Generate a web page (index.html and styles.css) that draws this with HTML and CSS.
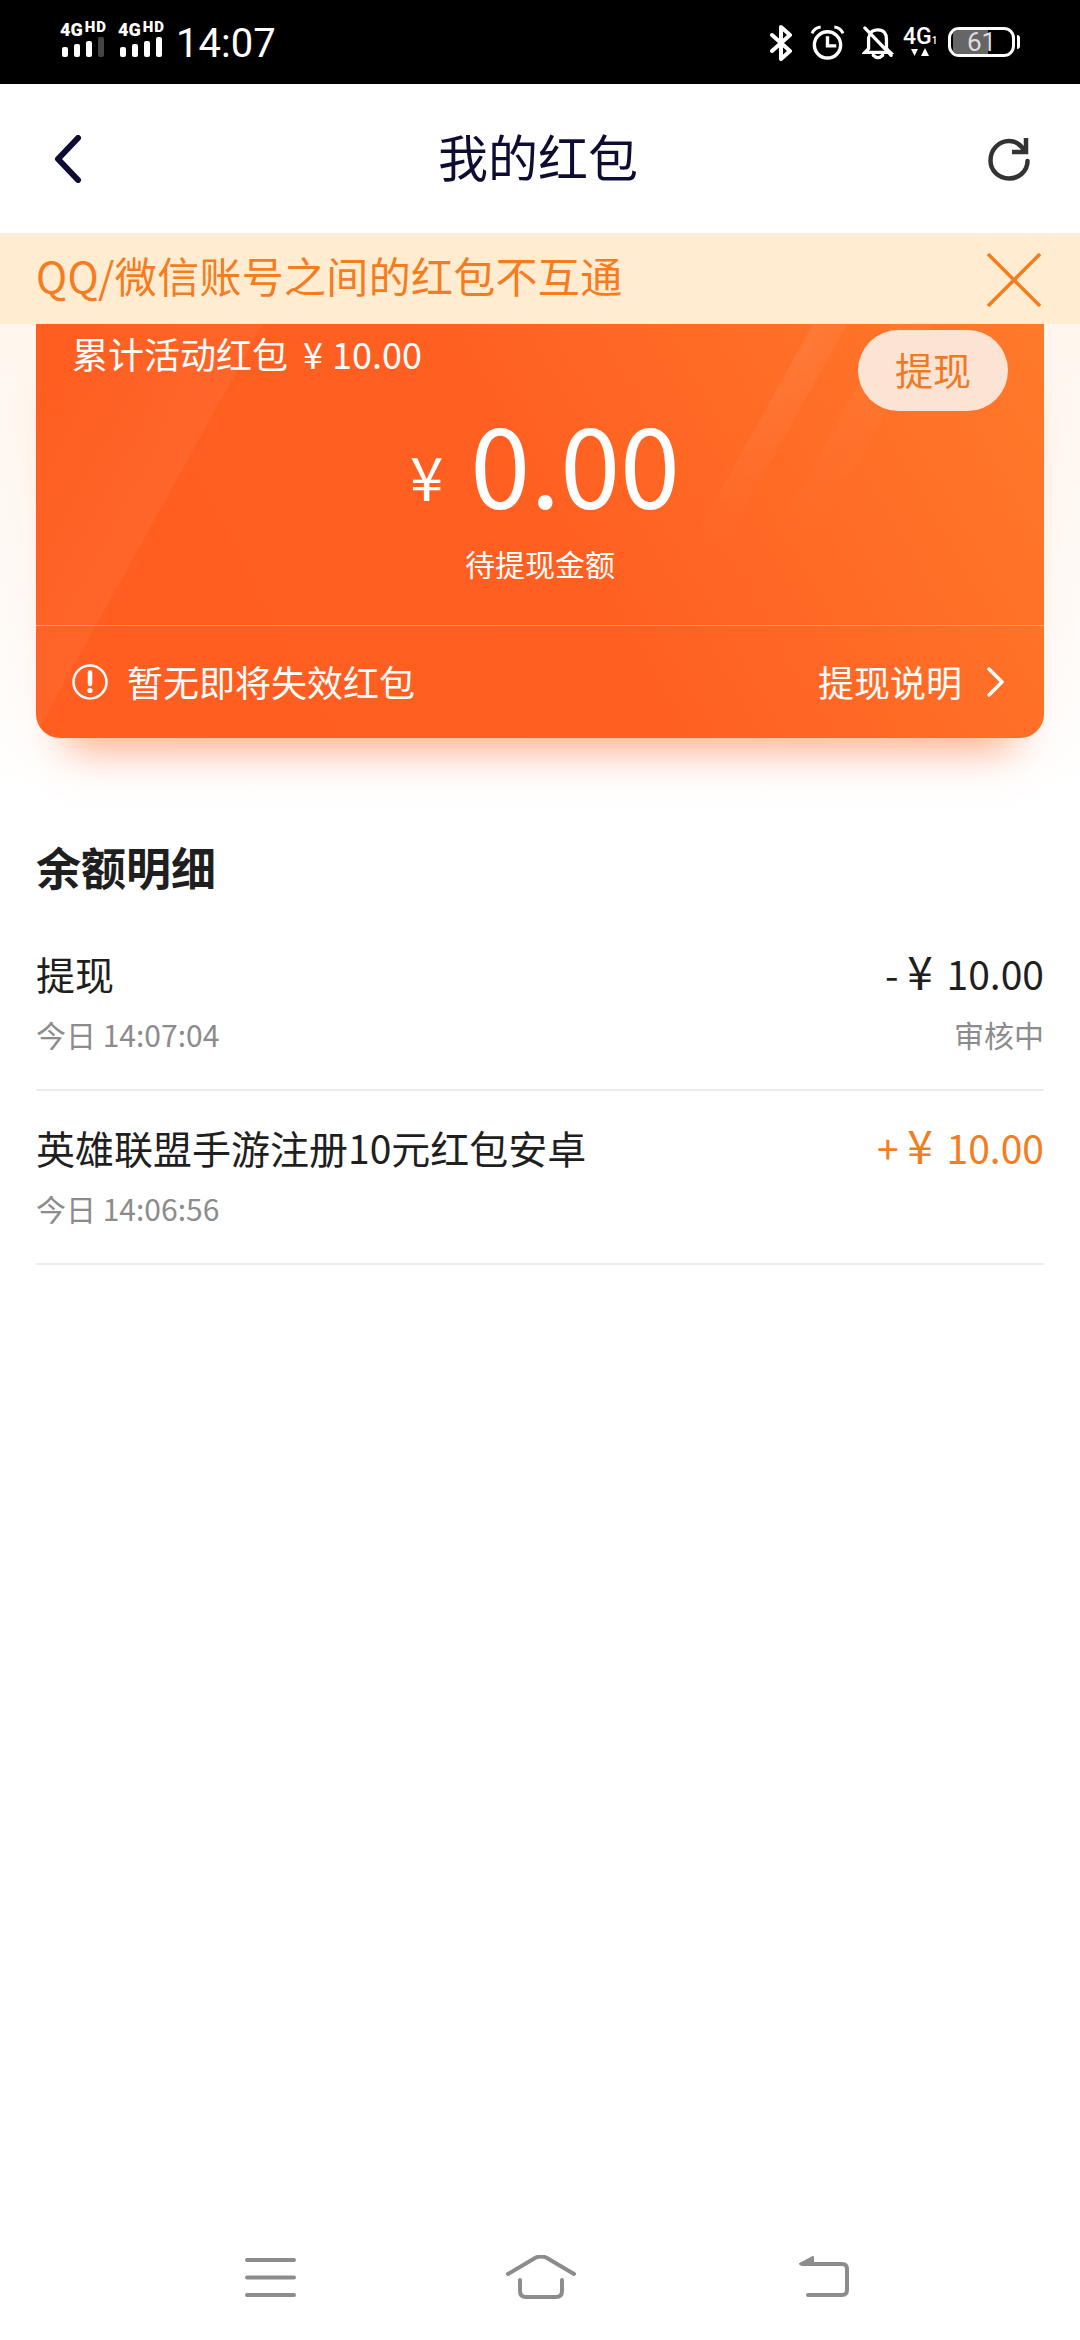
FILE: index.html
```html
<!DOCTYPE html>
<html lang="zh-CN">
<head>
    <meta charset="UTF-8">
    <meta name="viewport" content="width=device-width, initial-scale=1.0">
    <title>我的红包</title>
    <link rel="stylesheet" href="styles.css">
</head>
<body>
    <!-- Status bar -->
    <div class="status-bar">
        <div class="signal">
            <div class="signal-label"><span class="signal-g">4G</span><span class="signal-hd">HD</span></div>
            <div class="bars"><i class="bar-1"></i><i class="bar-2"></i><i class="bar-3"></i><i class="bar-4 dim"></i></div>
        </div>
        <div class="signal">
            <div class="signal-label"><span class="signal-g">4G</span><span class="signal-hd">HD</span></div>
            <div class="bars"><i class="bar-1"></i><i class="bar-2"></i><i class="bar-3"></i><i class="bar-4"></i></div>
        </div>
        <span class="clock">14:07</span>
        <div class="status-right">
            <svg class="ic-bt" width="22" height="36" viewBox="0 0 22 36" fill="none" stroke="#fff" stroke-width="4" stroke-linecap="round" stroke-linejoin="round">
                <path d="M2 10 L20 26 L11 34 V2 L20 10 L2 26"/>
            </svg>
            <svg class="ic-alarm" width="35" height="36" viewBox="0 0 36 36" fill="none" stroke="#fff" stroke-width="3.5">
                <circle cx="18" cy="20" r="13.5"/>
                <path d="M18 11 V21 H27"/>
                <path d="M2 8 Q5 2 11 1.5" stroke-width="3"/>
                <path d="M34 8 Q31 2 25 1.5" stroke-width="3"/>
            </svg>
            <svg class="ic-bell" width="32" height="36" viewBox="0 0 34 36" fill="none" stroke="#fff" stroke-width="3.5" stroke-linecap="round">
                <path d="M8 10 C9 5 13 4 17 4 C23 4 26 8 26 14 V24 L30 28 H3 L7 24 V12"/>
                <path d="M12 31 Q17 36 22 31"/>
                <path d="M3 2 L31 31"/>
            </svg>
            <div class="net">
                <div class="net-label">4G<small>1</small></div>
                <svg width="18" height="9" viewBox="0 0 18 9" fill="#fff">
                    <path d="M0 1 H7 L3.5 8 Z"/>
                    <path d="M10 8 H18 L14 0 Z"/>
                </svg>
            </div>
            <div class="battery">
                <div class="battery-fill"></div>
                <span class="battery-num">61</span>
            </div>
            <span class="battery-nub"></span>
        </div>
    </div>

    <!-- Title bar -->
    <div class="top-bar">
        <svg width="28" height="48" viewBox="0 0 28 48" fill="none" stroke="#0d0c33" stroke-width="6" stroke-linecap="round" stroke-linejoin="round">
            <path d="M24 3 L4 24 L24 45"/>
        </svg>
        <h1>我的红包</h1>
        <svg width="42" height="44" viewBox="0 0 42 44" fill="none" stroke="#333" stroke-width="4.5" stroke-linecap="round">
            <path d="M36 13 C32 7 27 4 21 4 C10.5 4 2.5 13 2.5 23.5 C2.5 34 11 41.5 21 41.5 C31 41.5 39.5 34 39.5 24"/>
            <path d="M38 1 V15 H24" stroke-linecap="butt"/>
        </svg>
    </div>

    <!-- Notice -->
    <div class="notice">
        <span class="notice-text">QQ/微信账号之间的红包不互通</span>
        <svg width="54" height="54" viewBox="0 0 54 54" fill="none" stroke="#f57c1f" stroke-width="3.5">
            <path d="M1 1 L53 53 M53 1 L1 53"/>
        </svg>
    </div>

    <!-- Balance card -->
    <div class="wallet">
        <div class="card">
            <div class="card-top">
                <span class="total">累计活动红包 <span class="total-sign">¥</span>10.00</span>
                <span class="withdraw-btn">提现</span>
            </div>
            <div class="amount"><span class="amount-sign">¥</span>0.00</div>
            <div class="amount-label">待提现金额</div>
            <div class="card-foot">
                <div class="foot-left">
                    <svg width="36" height="36" viewBox="0 0 36 36" fill="none" stroke="#fff" stroke-width="2.5">
                        <circle cx="18" cy="18" r="16.5"/>
                        <path d="M18 8.5 V20" stroke-width="4.5" stroke-linecap="round"/>
                        <circle cx="18" cy="26.5" r="2.6" fill="#fff" stroke="none"/>
                    </svg>
                    <span class="foot-text">暂无即将失效红包</span>
                </div>
                <div class="foot-right">
                    <span class="foot-text">提现说明</span>
                    <svg width="18" height="30" viewBox="0 0 18 30" fill="none" stroke="#fff" stroke-width="3.5" stroke-linecap="round" stroke-linejoin="round">
                        <path d="M2 2 L15 15 L2 28"/>
                    </svg>
                </div>
            </div>
        </div>
    </div>

    <!-- Records -->
    <div class="details">
        <h2>余额明细</h2>
        <div class="record">
            <div class="record-line">
                <span class="record-name">提现</span>
                <span class="record-money">- <span class="money-sign">¥</span> 10.00</span>
            </div>
            <div class="record-line sub">
                <span>今日 14:07:04</span>
                <span>审核中</span>
            </div>
        </div>
        <div class="record">
            <div class="record-line">
                <span class="record-name">英雄联盟手游注册10元红包安卓</span>
                <span class="record-money income">+ <span class="money-sign">¥</span> 10.00</span>
            </div>
            <div class="record-line sub">
                <span>今日 14:06:56</span>
            </div>
        </div>
    </div>

    <!-- System navigation -->
    <div class="nav-bar">
        <svg class="nav-menu" width="51" height="40" viewBox="0 0 51 40" fill="none" stroke="#8c8c8c" stroke-width="4" stroke-linecap="round">
            <path d="M2 3 H49 M2 20.5 H49 M2 38 H49"/>
        </svg>
        <svg class="nav-home" width="70" height="44" viewBox="0 0 70 44" fill="none" stroke="#8c8c8c" stroke-width="4" stroke-linecap="round" stroke-linejoin="round">
            <path d="M2 19 L29 3 Q35 0 41 3 L68 19"/>
            <path d="M14 25 V36 Q14 42 20 42 H50 Q56 42 56 36 V25"/>
        </svg>
        <svg class="nav-back" width="52" height="44" viewBox="0 0 52 44" fill="none" stroke="#8c8c8c" stroke-width="4" stroke-linecap="round" stroke-linejoin="round">
            <path d="M4 9 H44 Q49 9 49 14 V35 Q49 40 44 40 H10"/>
            <path d="M15 2 L2 9 L15 10 Z" fill="#8c8c8c" stroke-width="2"/>
        </svg>
    </div>
</body>
</html>
```

FILE: styles.css
```css
/* General styles */
* {
    box-sizing: border-box;
}

body {
    margin: 0;
    width: 1080px;
    height: 2340px;
    display: flex;
    flex-direction: column;
    background: #fff;
    font-family: "Noto Sans CJK SC", "Noto Sans", sans-serif;
    color: #1f1f1f;
    overflow: hidden;
}

h1, h2 {
    margin: 0;
    font-weight: normal;
}

/* Status bar */
.status-bar {
    height: 84px;
    flex-shrink: 0;
    display: flex;
    align-items: flex-start;
    padding: 0 60px 0 60px;
    background: #000;
    color: #fff;
    font-family: Roboto, sans-serif;
}

.signal {
    width: 58px;
    padding-top: 21px;
}

.signal-label {
    display: flex;
    align-items: flex-start;
    height: 16px;
    line-height: 17px;
    font-weight: 900;
}

.signal-g {
    font-size: 18px;
}

.signal-hd {
    margin-left: 2px;
    font-size: 15px;
    line-height: 13px;
    letter-spacing: 1px;
}

.bars {
    display: flex;
    align-items: flex-end;
    gap: 6px;
    height: 20px;
    padding-left: 2px;
}

.bars i {
    width: 6px;
    background: #fff;
    border-radius: 2px;
}

.bars .dim {
    background: #444;
}

.bar-1 { height: 10px; }
.bar-2 { height: 13px; }
.bar-3 { height: 16px; }
.bar-4 { height: 20px; }

.clock {
    font-size: 40px;
    line-height: 87px;
}

.status-right {
    margin-left: auto;
    display: flex;
    align-items: flex-start;
    padding-top: 25px;
}

.ic-alarm {
    margin-left: 18px;
}

.ic-bell {
    margin-left: 17px;
}

.net {
    width: 34px;
    margin-left: 9px;
    text-align: center;
    line-height: 0;
}

.net-label {
    height: 23px;
    font-size: 23px;
    font-weight: 500;
    line-height: 23px;
    white-space: nowrap;
}

.net-label small {
    font-size: 10px;
}

.battery {
    position: relative;
    width: 67px;
    height: 30px;
    margin: 2px 0 0 11px;
    border: 3px solid #fff;
    border-radius: 11px;
    overflow: hidden;
}

.battery-fill {
    width: 35px;
    height: 100%;
    margin-left: 2px;
    background: #666;
    border-radius: 3px 0 0 3px;
}

.battery-num {
    position: absolute;
    inset: 0;
    text-align: center;
    font-size: 26px;
    line-height: 25px;
    color: #ddd;
}

.battery-nub {
    width: 3px;
    height: 14px;
    margin: 10px 0 0 2px;
    background: #fff;
    border-radius: 0 3px 3px 0;
}

/* Title bar */
.top-bar {
    height: 149px;
    flex-shrink: 0;
    display: flex;
    align-items: center;
    justify-content: space-between;
    padding: 0 50px 0 54px;
    position: relative;
}

.top-bar h1 {
    position: absolute;
    left: 0;
    right: 0;
    padding: 0 4px 8px 0;
    text-align: center;
    font-size: 50px;
    line-height: 60px;
    color: #0d0c33;
}

/* Notice */
.notice {
    height: 91px;
    flex-shrink: 0;
    display: flex;
    align-items: center;
    justify-content: space-between;
    padding: 0 39px 0 36px;
    background: #ffecd1;
    border-top: 2px solid #f9eee0;
    color: #f57c1f;
}

.notice-text {
    padding-bottom: 11px;
    font-size: 42px;
    letter-spacing: 0.3px;
}

/* Balance card */
.wallet {
    height: 476px;
    flex-shrink: 0;
    padding: 0 36px;
    background: linear-gradient(to bottom, #fff6ee, #fffaf6 60%, #fff 100%);
}

.card {
    position: relative;
    isolation: isolate;
    height: 414px;
    color: #fff;
    border-radius: 0 0 24px 24px;
    background: linear-gradient(60deg, #ff5e20 0%, #ff5f21 50%, #ff7a2b 100%);
    box-shadow: 0 40px 40px -30px rgba(255, 94, 32, 0.55);
}

/* light streaks on the card */
.card::before,
.card::after {
    content: "";
    position: absolute;
    inset: 0;
    z-index: -1;
    border-radius: inherit;
}

.card::before {
    background: linear-gradient(119deg, transparent 40px, rgba(255, 255, 255, 0.045) 198px, transparent 199px);
}

.card::after {
    background:
        linear-gradient(119deg, transparent 679px, rgba(255, 255, 255, 0.07) 680px, rgba(255, 255, 255, 0.05) 709px, transparent 710px),
        linear-gradient(119deg, transparent 748px, rgba(255, 255, 255, 0.04) 749px, rgba(255, 255, 255, 0.03) 785px, transparent 786px);
    -webkit-mask-image: linear-gradient(to bottom, #000 10%, transparent 58%);
    mask-image: linear-gradient(to bottom, #000 10%, transparent 58%);
}

.card-top {
    display: flex;
    justify-content: space-between;
    align-items: flex-start;
    padding: 6px 36px 0 36px;
}

.total {
    font-size: 36px;
    line-height: 46px;
}

.total-sign {
    margin: 0 9px 0 7px;
}

.withdraw-btn {
    width: 150px;
    height: 81px;
    border-radius: 41px;
    background: #fde3d4;
    color: #ee7a24;
    font-size: 38px;
    line-height: 78px;
    text-align: center;
}

.amount {
    height: 120px;
    margin-top: -9px;
    padding-left: 10px;
    display: flex;
    justify-content: center;
    align-items: center;
    font-size: 108px;
    line-height: 120px;
}

.amount-sign {
    position: relative;
    top: 13px;
    margin-right: 27px;
    font-size: 60px;
    line-height: 60px;
}

.amount-label {
    margin-top: 21px;
    font-size: 30px;
    line-height: 40px;
    text-align: center;
}

.card-foot {
    height: 113px;
    margin-top: 42px;
    display: flex;
    align-items: center;
    justify-content: space-between;
    padding: 0 39px 0 36px;
    border-top: 1px solid rgba(255, 255, 255, 0.35);
}

.foot-left,
.foot-right {
    display: flex;
    align-items: center;
}

.foot-text {
    padding-bottom: 3px;
    font-size: 36px;
}

.foot-left .foot-text {
    margin-left: 19px;
}

.foot-right svg {
    margin-left: 25px;
}

/* Records */
.details {
    flex: 1;
    padding: 37px 36px 0;
}

.details h2 {
    font-size: 45px;
    line-height: 60px;
    font-weight: bold;
    margin-bottom: 20px;
}

.record {
    height: 174px;
    padding-top: 27px;
    border-bottom: 2px solid #ececec;
}

.record-line {
    display: flex;
    justify-content: space-between;
    font-size: 39px;
    line-height: 58px;
}

.record-line.sub {
    margin-top: 11px;
    font-size: 30px;
    line-height: 42px;
    color: #8c8c8c;
}

.record-money.income {
    color: #f57c1f;
}

.money-sign {
    margin-right: 5px;
    font-size: 46px;
    line-height: 1;
}

/* System navigation */
.nav-bar {
    height: 120px;
    flex-shrink: 0;
    display: flex;
    align-items: flex-start;
    padding: 35px 0 0 245px;
}

.nav-menu {
    margin-top: 2px;
}

.nav-home {
    margin-left: 210px;
}

.nav-back {
    margin-left: 222px;
}
```
